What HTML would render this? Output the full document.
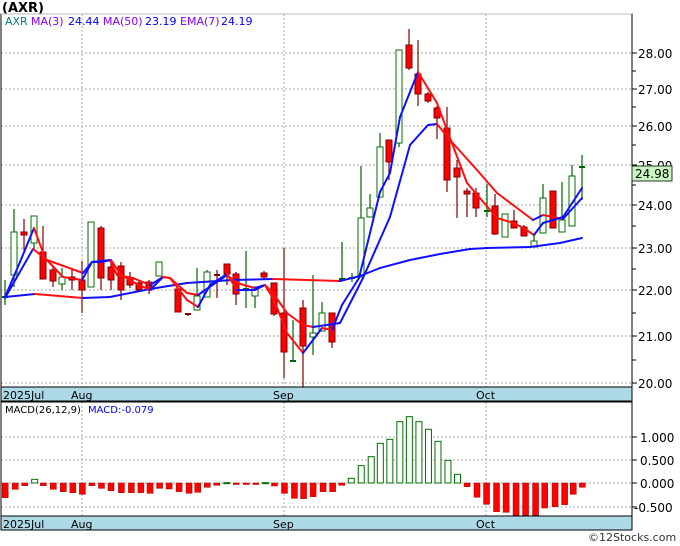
<!DOCTYPE html>
<html><head><meta charset="utf-8"><style>
html,body{margin:0;padding:0;background:#fff;width:680px;height:546px;overflow:hidden}
svg{display:block}
text{font-family:"DejaVu Sans","Liberation Sans",sans-serif}
</style></head><body>
<svg id="s" width="680" height="546" viewBox="0 0 680 546" xmlns="http://www.w3.org/2000/svg">
<rect x="0" y="0" width="680" height="546" fill="#fff"/>
<text x="2" y="12" font-size="13" font-weight="bold" font-family="Liberation Sans,sans-serif">(AXR)</text>
<g id="grid" stroke="#aaa" stroke-dasharray="2,2" stroke-width="1"></g>
<g id="main"></g>
<g id="macd"></g>
<rect x="1" y="387" width="631" height="14" fill="#add8e6" stroke="#000"/>
<rect x="1" y="516" width="631" height="14" fill="#add8e6" stroke="#000"/>
<g font-size="11" fill="#000">
<text x="3" y="399">2025Jul</text><text x="71" y="399">Aug</text><text x="273" y="399">Sep</text><text x="476" y="399">Oct</text>
<text x="3" y="528">2025Jul</text><text x="71" y="528">Aug</text><text x="273" y="528">Sep</text><text x="476" y="528">Oct</text>
</g>
<rect x="1" y="14" width="631" height="516" fill="none" stroke="#000"/>
<line x1="1" y1="14" x2="632" y2="14" stroke="#bbb"/>
<line x1="632" y1="14" x2="632" y2="530" stroke="#000"/>
<line x1="1" y1="402" x2="632" y2="402" stroke="#000"/>
<g font-size="11">
<text x="5" y="25" fill="#008080">AXR</text>
<text x="31" y="25" fill="#8000ff">MA(3)</text>
<text x="68" y="25" fill="#0000ff">24.44</text>
<text x="103" y="25" fill="#8000ff">MA(50)</text>
<text x="145" y="25" fill="#0000ff">23.19</text>
<text x="180" y="25" fill="#8000ff">EMA(7)</text>
<text x="221" y="25" fill="#0000ff">24.19</text>
<text x="5" y="413" font-size="10" fill="#000">MACD(26,12,9)</text>
<text x="88" y="413" font-size="10" fill="#0000ff">MACD:-0.079</text>
</g>
<g id="axis" font-size="12" fill="#000"></g>
<rect x="632" y="166" width="40" height="15" fill="#c8f5c0" stroke="#333"/>
<text x="635" y="178" font-size="12">24.98</text>
<text x="588" y="541" font-size="11" fill="#333">©12Stocks.com</text>
</svg>
<script>
const NS="http://www.w3.org/2000/svg";
function el(p,t,a){const e=document.createElementNS(NS,t);for(const k in a)e.setAttribute(k,a[k]);p.appendChild(e);return e;}
const grid=document.getElementById('grid'),main=document.getElementById('main'),macd=document.getElementById('macd'),axis=document.getElementById('axis');
const lv=[[28,53],[27,89],[26,126],[25,165],[24,205],[23,248],[22,290],[21,336],[20,383]];
lv.forEach(([p,y])=>{el(grid,'line',{x1:1,y1:y,x2:632,y2:y});el(axis,'text',{x:638,y:y+5}).textContent=p.toFixed(2);el(axis,'line',{x1:632,y1:y,x2:637,y2:y,stroke:'#000'});});
[[1,437],[0.5,460],[0,483],[-0.5,507]].forEach(([p,y])=>{el(grid,'line',{x1:1,y1:y,x2:632,y2:y});el(axis,'text',{x:p<0?634:640,y:y+5}).textContent=p.toFixed(3);el(axis,'line',{x1:632,y1:y,x2:637,y2:y,stroke:'#000'});});
for(let i=0;i<8;i++){const y=[71,107,145,185,226,269,313,360][i];el(axis,'line',{x1:632,y1:y,x2:636,y2:y,stroke:'#000'});}
[82,284,486].forEach(x=>{el(grid,'line',{x1:x,y1:14,x2:x,y2:387});el(grid,'line',{x1:x,y1:402,x2:x,y2:516});});
// candles: x,bt,bb,wt,wb,type
const C=[[5,296,298,280,305,'g'],[14,232,275,209,287,'g'],[24,232,235,219,250,'r'],[34,216,243,216,250,'g'],[43,252,279,226,279,'r'],[53,270,281,265,287,'r'],[62,277,284,268,290,'g'],[72,277,280,268,290,'r'],[82,280,290,261,313,'r'],[91,222,287,222,287,'g'],[101,228,278,226,290,'r'],[111,267,280,262,290,'r'],[121,266,290,262,300,'r'],[130,278,285,272,288,'r'],[139,283,290,280,292,'r'],[149,282,290,280,294,'r'],[159,262,276,262,276,'g'],[178,289,312,289,312,'r'],[188,313,314,313,316,'r'],[197,296,310,268,310,'g'],[207,272,297,270,297,'g'],[217,274,276,270,298,'r'],[227,264,274,264,285,'r'],[236,274,294,272,305,'r'],[246,288,290,251,308,'g'],[255,287,296,287,308,'g'],[264,273,277,271,279,'r'],[274,283,314,283,316,'r'],[284,313,352,248,378,'r'],[293,360,362,320,361,'g'],[303,308,346,300,387,'r'],[313,333,337,275,355,'g'],[322,313,331,302,331,'g'],[332,313,342,313,348,'r'],[342,278,280,242,280,'g'],[352,277,279,273,282,'g'],[361,218,277,166,277,'g'],[370,208,217,194,217,'g'],[380,147,197,133,197,'g'],[389,140,162,140,180,'r'],[399,50,143,50,147,'g'],[409,45,68,29,70,'r'],[418,74,94,40,106,'r'],[428,94,101,92,103,'r'],[437,108,118,106,139,'r'],[447,128,180,107,192,'r'],[457,168,177,160,218,'r'],[467,191,194,188,217,'r'],[476,193,208,188,217,'r'],[487,210,212,184,217,'g'],[495,206,234,194,235,'r'],[505,214,237,214,237,'g'],[514,221,228,210,228,'r'],[524,227,236,225,236,'r'],[534,241,247,235,247,'g'],[543,198,233,184,233,'g'],[553,191,228,191,228,'r'],[562,220,232,182,232,'g'],[572,176,226,165,226,'g'],[582,166,168,155,200,'g']];
C.forEach(([x,bt,bb,wt,wb,t])=>{
 const wc=t=='g'?'#006400':'#800000';
 el(main,'line',{x1:x,y1:wt,x2:x,y2:wb,stroke:wc,'stroke-width':1.2});
 if(bb-bt<3){el(main,'line',{x1:x-3,y1:bt+1,x2:x+3,y2:bt+1,stroke:wc,'stroke-width':2});}
 else if(t=='g')el(main,'rect',{x:x-3,y:bt,width:6,height:bb-bt,fill:'#fff',stroke:'#007000','stroke-width':1});
 else el(main,'rect',{x:x-3,y:bt,width:6,height:bb-bt,fill:'#f00',stroke:'#800000','stroke-width':1});
});
function line(pts){for(let i=1;i<pts.length;i++){const[a,b]=pts[i-1],[c,d]=pts[i];el(main,'line',{x1:a,y1:b,x2:c,y2:d,stroke:d<=b?'#1010ff':'#ff1010','stroke-width':2,'stroke-linecap':'round'});}}
line([[5,297],[35,294],[83,298],[110,297],[150,289],[187,283],[233,280],[273,279],[340,281],[360,276],[380,268],[410,260],[440,254],[470,249],[487,248],[530,247],[560,243],[582,238]]);
line([[5,298],[33,249],[47,260],[83,273],[92,262],[110,260],[117,275],[133,278],[150,285],[163,277],[170,278],[187,293],[198,295],[227,275],[237,283],[255,288],[265,285],[273,293],[287,313],[303,325],[313,327],[340,323],[363,278],[390,217],[410,145],[428,125],[437,124],[450,140],[477,170],[497,193],[533,220],[543,215],[563,219],[582,198]]);
line([[5,297],[20,262],[34,228],[45,258],[63,277],[82,280],[92,262],[101,262],[111,260],[121,275],[135,283],[150,290],[163,277],[170,278],[187,300],[198,307],[210,285],[227,274],[237,290],[255,290],[265,285],[274,300],[287,333],[303,353],[313,340],[322,328],[332,330],[342,305],[359,278],[380,192],[390,173],[400,117],[418,72],[437,103],[447,130],[467,183],[497,218],[510,222],[522,227],[534,235],[543,223],[563,217],[582,188]]);
// macd
const M=[[12,383],[35,358],[57,347],[80,328],[100,347],[123,358],[146,365],[168,368],[190,373],[212,347],[234,355],[256,362],[280,368],[303,368],[325,368],[346,370],[368,355],[390,357],[413,365],[436,370],[456,367],[478,352],[500,346],[523,338],[545,343],[568,343],[590,343],[612,338],[633,348],[656,370],[679,385],[700,386],[722,380],[745,365],[767,365],[788,346],[810,325],[833,287],[856,260],[877,220],[899,208],[922,155],[944,140],[966,155],[988,178],[1010,214],[1033,271],[1055,313],[1077,350],[1100,382],[1122,403],[1145,425],[1167,427],[1190,436],[1212,436],[1235,436],[1256,414],[1280,410],[1302,404],[1322,373],[1343,352]];
M.forEach(([zx,zy])=>{const x=zx/2.306,y=370+zy/3,z=483;
 if(y<z){el(macd,'rect',{x:x-3,y:y,width:6,height:Math.max(z-y,1),fill:'#fff',stroke:'#007000'});}
 else el(macd,'rect',{x:x-3,y:z,width:6,height:Math.max(y-z,1.5),fill:'#f00',stroke:'#a00000','stroke-width':0.5});
});
</script>
</body></html>
